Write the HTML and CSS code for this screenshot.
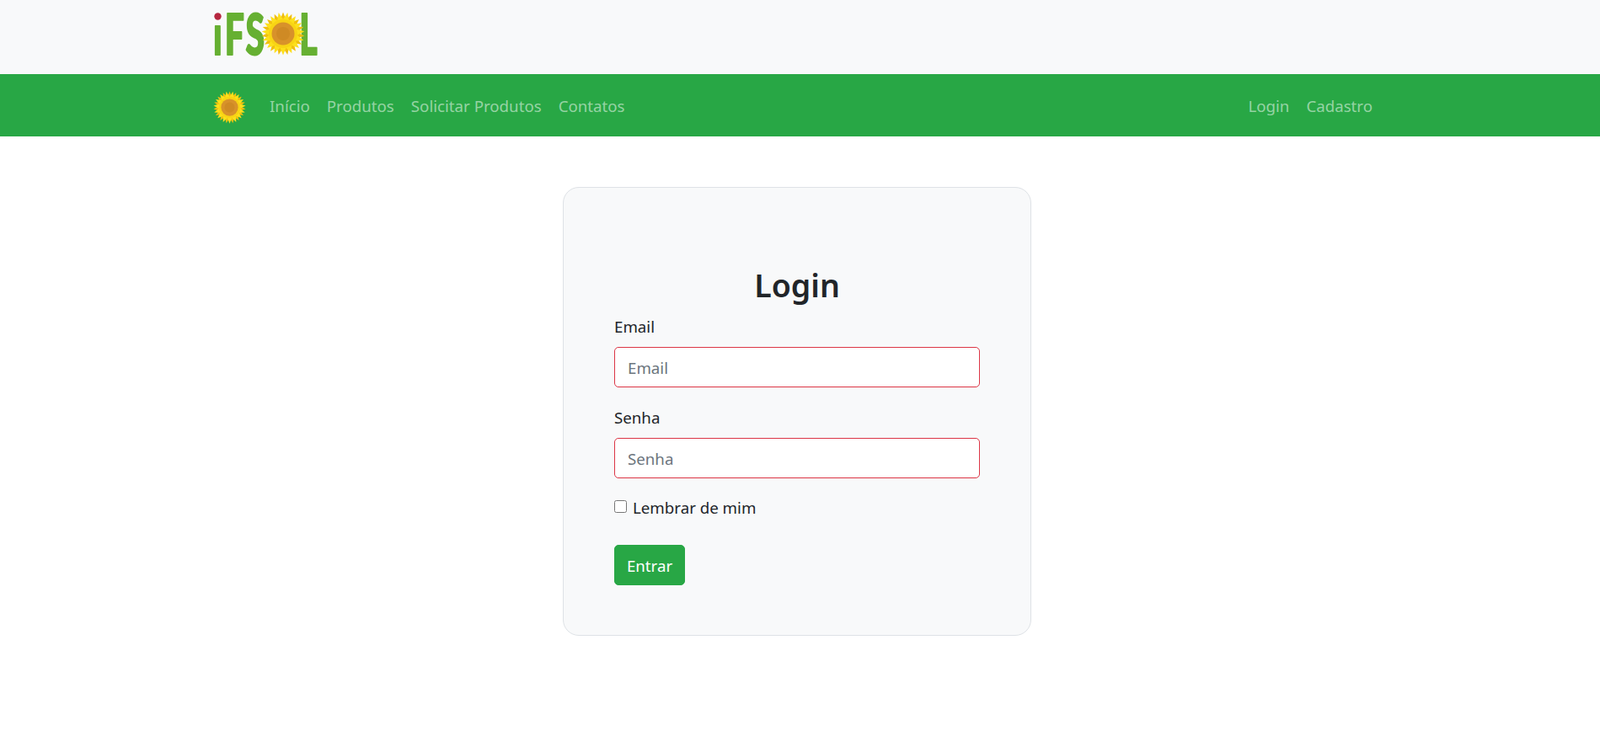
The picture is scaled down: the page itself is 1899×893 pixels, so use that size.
FILE: index.html
```html
<!DOCTYPE html>
<html lang="pt-BR">
<head>
<meta charset="utf-8">
<title>IFSOL - Login</title>
<link rel="stylesheet" href="styles.css">
</head>
<body>
<svg class="defs" width="0" height="0" aria-hidden="true">
  <defs>
    <g id="petal"><polygon points="-5,-13 0,-25.5 5,-13"/></g>
    <g id="flower">
      <g fill="#f0bf10">
        <use href="#petal"/><use href="#petal" transform="rotate(24)"/><use href="#petal" transform="rotate(48)"/><use href="#petal" transform="rotate(72)"/><use href="#petal" transform="rotate(96)"/><use href="#petal" transform="rotate(120)"/><use href="#petal" transform="rotate(144)"/><use href="#petal" transform="rotate(168)"/><use href="#petal" transform="rotate(192)"/><use href="#petal" transform="rotate(216)"/><use href="#petal" transform="rotate(240)"/><use href="#petal" transform="rotate(264)"/><use href="#petal" transform="rotate(288)"/><use href="#petal" transform="rotate(312)"/><use href="#petal" transform="rotate(336)"/>
      </g>
      <g fill="#fde01a">
        <use href="#petal" transform="rotate(12)"/><use href="#petal" transform="rotate(36)"/><use href="#petal" transform="rotate(60)"/><use href="#petal" transform="rotate(84)"/><use href="#petal" transform="rotate(108)"/><use href="#petal" transform="rotate(132)"/><use href="#petal" transform="rotate(156)"/><use href="#petal" transform="rotate(180)"/><use href="#petal" transform="rotate(204)"/><use href="#petal" transform="rotate(228)"/><use href="#petal" transform="rotate(252)"/><use href="#petal" transform="rotate(276)"/><use href="#petal" transform="rotate(300)"/><use href="#petal" transform="rotate(324)"/><use href="#petal" transform="rotate(348)"/>
      </g>
      <circle r="17" fill="#f8d414"/>
      <circle r="13.5" fill="#d8922a"/>
      <circle r="8" fill="#cf8a24"/>
    </g>
  </defs>
</svg>

<header class="brandbar">
  <div class="container">
    <svg class="logo" width="130" height="88" viewBox="0 0 130 88" role="img" aria-label="IFSOL">
      <circle cx="5.5" cy="19.5" r="4.2" fill="#b5263f"/>
      <text class="logo-letters" transform="scale(.62 1)" x="0 22 62 165" y="65.5">ıFSL</text>
      <use href="#flower" transform="translate(83 40)"/>
    </svg>
  </div>
</header>

<nav class="navbar">
  <div class="container nav-inner">
    <svg class="nav-flower" width="39" height="39" viewBox="-26 -26 52 52" aria-hidden="true"><use href="#flower"/></svg>
    <ul class="nav-links">
      <li><a href="#">Início</a></li>
      <li><a href="#">Produtos</a></li>
      <li><a href="#">Solicitar Produtos</a></li>
      <li><a href="#">Contatos</a></li>
    </ul>
    <ul class="nav-links nav-right">
      <li><a href="#">Login</a></li>
      <li><a href="#">Cadastro</a></li>
    </ul>
  </div>
</nav>

<main class="page">
  <form class="card">
    <h1 class="title">Login</h1>
    <div class="field">
      <label class="label" for="email">Email</label>
      <input class="input" id="email" type="email" placeholder="Email">
    </div>
    <div class="field">
      <label class="label" for="senha">Senha</label>
      <input class="input" id="senha" type="password" placeholder="Senha">
    </div>
    <div class="check">
      <input class="checkbox" id="lembrar" type="checkbox">
      <label for="lembrar">Lembrar de mim</label>
    </div>
    <button class="btn" type="button">Entrar</button>
  </form>
</main>
</body>
</html>
```
FILE: styles.css
```css
* { box-sizing: border-box; }
html, body { margin: 0; padding: 0; }
body {
  background: #fff;
  color: #212529;
  font-family: "Noto Sans", "Open Sans", sans-serif;
  font-size: 18.7px;
  line-height: 29px;
}
.defs { position: absolute; }
.container { width: 1393px; margin: 0 auto; }
.brandbar { background: #f8f9fa; height: 88px; }
.logo { display: block; }
.logo-letters {
  font-family: "Lato", sans-serif;
  font-weight: 900;
  font-size: 66px;
  fill: #66b032;
  stroke: #66b032;
  stroke-width: 2px;
  stroke-linejoin: round;
}
.navbar { background: #28a745; height: 74px; }
.nav-inner { display: flex; align-items: center; height: 100%; }
.nav-flower { display: block; flex: none; margin: 4px 28px 0 0; }
.nav-links { display: flex; gap: 20px; list-style: none; margin: 0; padding: 0; }
.nav-links a { color: rgba(255, 255, 255, .52); text-decoration: none; }
.nav-right { margin-left: auto; margin-right: 17px; }
.page { display: flex; justify-content: center; padding: 60px 7px 0 0; }
.card {
  width: 556px;
  height: 533px;
  padding: 92px 60px 0;
  background: #f8f9fa;
  border: 1px solid #dee2e6;
  border-radius: 19px;
}
.title {
  margin: 0 0 11px;
  font-size: 37.5px;
  font-weight: 600;
  line-height: 48px;
  text-align: center;
}
.field { margin-bottom: 22px; }
.label { display: block; line-height: 27px; margin-bottom: 11px; }
.input {
  display: block;
  width: 100%;
  height: 48px;
  padding: 1px 15px 0;
  background: #fff;
  border: 1px solid #dc3545;
  border-radius: 5px;
  color: #212529;
  font: inherit;
}
.input::placeholder { color: #6c757d; opacity: 1; }
.check { display: flex; align-items: flex-start; gap: 7px; line-height: 25px; margin-bottom: 32px; }
.checkbox { width: 15px; height: 15px; margin: 4px 0 0; }
.btn {
  display: block;
  width: 84px;
  height: 48px;
  padding: 1px 0 0;
  background: #28a745;
  border: 1px solid #28a745;
  border-radius: 5px;
  color: #fff;
  font: inherit;
}
```
